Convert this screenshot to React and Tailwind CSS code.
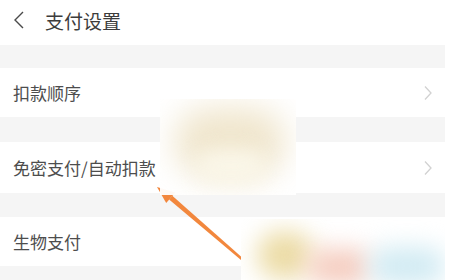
import React from "react";

const rows = [
  { label: "扣款顺序", h: "h-[49px]", mt: "mt-[23px]", arrow: true },
  { label: "免密支付/自动扣款", h: "h-[51px]", mt: "mt-[25px]", arrow: true },
  { label: "生物支付", h: "h-[49px]", mt: "mt-[24px]", arrow: false },
];

const Chevron = () => (
  <svg width="10" height="16" viewBox="0 0 10 16" className="mr-[16px]">
    <path d="M2 1.5 L8 8 L2 14.5" fill="none" stroke="#d2d2d2" strokeWidth="1.3" />
  </svg>
);

const App = () => {
  return (
    <div
      className="relative w-[449px] h-[280px] overflow-hidden bg-white"
      style={{ fontFamily: '"Noto Sans CJK SC", "Noto Sans", sans-serif' }}
    >
      <div className="w-[445px] h-[280px] bg-[#f5f5f5]">
        {/* header */}
        <div className="flex items-center h-[45px] w-[449px] bg-white pb-[5px]">
          <svg width="12" height="18" viewBox="0 0 12 18" className="ml-[13px]">
            <path d="M10 1 L2 9 L10 17" fill="none" stroke="#4a4a4a" strokeWidth="1.4" />
          </svg>
          <span className="ml-[20px] text-[19px] leading-none text-[#3c3c3c]">支付设置</span>
        </div>

        {rows.map((r) => (
          <div
            key={r.label}
            className={`flex items-center justify-between w-[449px] bg-white ${r.h} ${r.mt}`}
          >
            <span className="ml-[13px] text-[17px] leading-none text-[#4d4d4d]">{r.label}</span>
            {r.arrow && <Chevron />}
          </div>
        ))}
      </div>

      {/* orange arrow */}
      <svg className="absolute left-0 top-0" width="449" height="280" viewBox="0 0 449 280">
        <polygon points="157,187 175.3,192.4 166.2,203" fill="#f2873d" />
        <polygon points="169.1,199.6 172.3,195.8 243.8,259.1 242.2,260.9" fill="#f2873d" />
      </svg>

      {/* blurred cover 1 */}
      <div className="absolute left-[160px] top-[99px] w-[136px] h-[96px] overflow-hidden bg-white/95">
        <div className="absolute left-[14px] top-[8px] w-[112px] h-[70px] rounded-full bg-[#f0e6cd] blur-[16px]" />
        <div className="absolute left-[36px] top-[50px] w-[70px] h-[34px] rounded-full bg-[#faf6e8] blur-[10px]" />
      </div>

      {/* blurred cover 2 */}
      <div className="absolute left-[241px] top-[219px] w-[204px] h-[61px] overflow-hidden bg-white">
        <div className="absolute left-[16px] top-[12px] w-[56px] h-[48px] rounded-full bg-[#ecdca6] blur-[12px]" />
        <div className="absolute left-[66px] top-[30px] w-[64px] h-[36px] rounded-full bg-[#f5cdc0] blur-[12px]" />
        <div className="absolute left-[128px] top-[28px] w-[76px] h-[38px] rounded-full bg-[#d2ebf3] blur-[12px]" />
      </div>
    </div>
  );
};

export default App;
